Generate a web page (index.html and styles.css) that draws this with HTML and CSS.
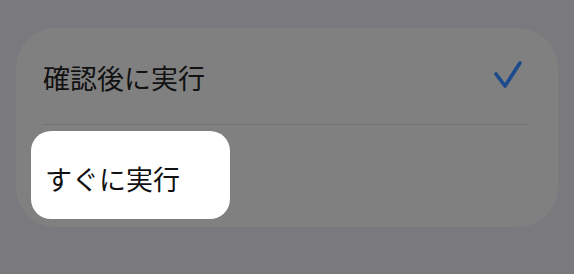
FILE: index.html
```html
<!DOCTYPE html>
<html lang="ja">
<head>
  <meta charset="UTF-8">
  <meta name="viewport" content="width=device-width, initial-scale=1.0">
  <title>実行タイミング</title>
  <link rel="stylesheet" href="styles.css">
</head>
<body>

  <div class="options">
    <div class="option selected">
      <span class="label">確認後に実行</span>
      <svg class="check" width="28" height="30" viewBox="0 0 28 30">
        <path d="M2 15 L11 27 L26 4" fill="none" stroke="#1d4a8c" stroke-width="3.6" stroke-linecap="round" stroke-linejoin="round"/>
      </svg>
    </div>
    <div class="option">
      <span class="pressed"><span class="label">すぐに実行</span></span>
    </div>
  </div>

</body>
</html>
```

FILE: styles.css
```css
* {
  box-sizing: border-box;
  margin: 0;
  padding: 0;
}

body {
  width: 574px;
  height: 274px;
  overflow: hidden;
  background-color: #7a7a7e;
  font-family: "Noto Sans CJK JP", "Noto Sans", sans-serif;
  padding: 28px 16px 0 16px;
}

.options {
  width: 542px;
  height: 199px;
  background-color: #808080;
  border-radius: 40px;
  padding: 0 30px 0 27px;
}

.option {
  display: flex;
  align-items: center;
}

.option.selected {
  height: 97px;
  justify-content: space-between;
  border-bottom: 1px solid #727272;
}

.label {
  font-size: 27px;
  color: #111111;
  line-height: 1;
  padding-top: 2px;
}

.check {
  margin-right: 6px;
  margin-top: -4px;
}

.pressed {
  display: flex;
  align-items: center;
  width: 199px;
  height: 88px;
  margin: 6px 0 0 -12px;
  padding: 4px 0 0 14px;
  background-color: #ffffff;
  border-radius: 20px;
}
```
